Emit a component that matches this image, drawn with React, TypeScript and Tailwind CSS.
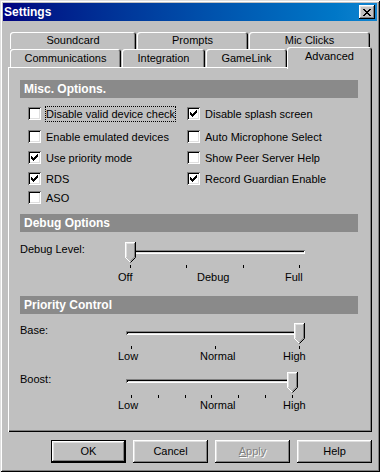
import React from 'react';

const raised =
  'shadow-[inset_-1px_-1px_#000,inset_1px_1px_#fff,inset_-2px_-2px_#808080,inset_2px_2px_#dfdfdf]';

const leftChecks = [
  { label: 'Disable valid device check', checked: false, focused: true },
  { label: 'Enable emulated devices', checked: false },
  { label: 'Use priority mode', checked: true },
  { label: 'RDS', checked: true },
  { label: 'ASO', checked: false },
];

const rightChecks = [
  { label: 'Disable splash screen', checked: true },
  { label: 'Auto Microphone Select', checked: false },
  { label: 'Show Peer Server Help', checked: false },
  { label: 'Record Guardian Enable', checked: true },
];

function CheckBox({ checked }: { checked?: boolean }) {
  return (
    <span className="w-[13px] h-[13px] shrink-0 bg-white flex items-center justify-center shadow-[inset_1px_1px_#808080,inset_-1px_-1px_#fff,inset_2px_2px_#000,inset_-2px_-2px_#dfdfdf]">
      {checked && (
        <svg width="7" height="7" viewBox="0 0 7 7" shapeRendering="crispEdges">
          <path
            d="M6 0h1v1h-1z M5 1h2v1h-2z M0 2h1v1h-1z M4 2h3v1h-3z M0 3h2v1h-2z M3 3h3v1h-3z M0 4h5v1h-5z M1 5h3v1h-3z M2 6h1v1h-1z"
            fill="#000"
          />
        </svg>
      )}
    </span>
  );
}

function Check({ label, checked, focused }: { label: string; checked?: boolean; focused?: boolean }) {
  return (
    <div className="flex items-center h-[13px]">
      <CheckBox checked={checked} />
      <span
        className={`ml-[4px] leading-[14px] border border-dotted whitespace-nowrap ${
          focused ? 'border-black' : 'border-transparent'
        }`}
      >
        {label}
      </span>
    </div>
  );
}

function Header({ title }: { title: string }) {
  return (
    <div className="w-[338px] h-[18px] bg-[#8a8a8a] text-white font-bold text-[12px] pl-[4px] flex items-center">
      {title}
    </div>
  );
}

function Thumb({ className }: { className: string }) {
  return (
    <svg className={className} width="11" height="21" viewBox="0 0 11 21" shapeRendering="crispEdges">
      <path d="M0 0H11V15.5L5.5 21L0 15.5Z" fill="#c0c0c0" />
      <path d="M0.5 15.5V0.5H10" stroke="#fff" fill="none" />
      <path d="M1.5 15V1.5H9" stroke="#dfdfdf" fill="none" />
      <path d="M0.5 15.5L5 20" stroke="#fff" fill="none" shapeRendering="auto" />
      <path d="M10.5 0V15.5L5.5 20.5" stroke="#000" fill="none" shapeRendering="auto" />
      <path d="M9.5 1V15L5.5 19" stroke="#808080" fill="none" shapeRendering="auto" />
    </svg>
  );
}

function Ticks({ count, className }: { count: number; className: string }) {
  return (
    <div className={`flex justify-between h-[3px] ${className}`}>
      {Array.from({ length: count }).map((_, i) => (
        <span key={i} className="w-px h-[3px] bg-black" />
      ))}
    </div>
  );
}

const track =
  'h-[4px] bg-[#c0c0c0] shadow-[inset_1px_1px_#808080,inset_-1px_-1px_#fff,inset_2px_2px_#000,inset_-2px_-2px_#dfdfdf]';

function Tab({ label, className }: { label: string; className: string }) {
  return (
    <div
      className={`flex items-center justify-center rounded-t-[3px] shadow-[inset_1px_1px_#fff,inset_-1px_0_#000,inset_-2px_0_#808080] ${className}`}
    >
      {label}
    </div>
  );
}

function Button({ children, isDefault }: { children: React.ReactNode; isDefault?: boolean }) {
  return (
    <div
      className={`w-[75px] h-[23px] flex items-center justify-center ${
        isDefault
          ? 'shadow-[inset_0_0_0_1px_#000,inset_-2px_-2px_#000,inset_2px_2px_#fff,inset_-3px_-3px_#808080,inset_3px_3px_#dfdfdf]'
          : raised
      }`}
    >
      {children}
    </div>
  );
}

export default function App() {
  return (
    <div className="w-[380px] h-[472px] overflow-hidden bg-[#c0c0c0] p-[3px] shadow-[inset_1px_1px_#dfdfdf,inset_-1px_-1px_#000,inset_2px_2px_#fff,inset_-2px_-2px_#808080] font-['Liberation_Sans',Arial,sans-serif] text-[11px] leading-[13px] text-black">
      {/* title bar */}
      <div className="h-[18px] flex items-center justify-between bg-linear-to-r from-[#000080] to-[#1084d0] pl-[1px] pr-[2px]">
        <span className="text-white font-bold text-[12px]">Settings</span>
        <div className={`w-[16px] h-[14px] bg-[#c0c0c0] flex items-center justify-center ${raised}`}>
          <svg width="8" height="7" viewBox="0 0 8 7" shapeRendering="crispEdges">
            <path
              d="M0 0h2v1h-2z M6 0h2v1h-2z M1 1h2v1h-2z M5 1h2v1h-2z M2 2h4v1h-4z M3 3h2v1h-2z M2 4h4v1h-4z M1 5h2v1h-2z M5 5h2v1h-2z M0 6h2v1h-2z M6 6h2v1h-2z"
              fill="#000"
            />
          </svg>
        </div>
      </div>

      <div className="px-[5px] mt-[11px]">
        {/* tabs */}
        <div className="ml-[2px] flex gap-[1px] h-[17px]">
          <Tab label="Soundcard" className="w-[126px] h-[17px]" />
          <Tab label="Prompts" className="w-[111px] h-[17px]" />
          <Tab label="Mic Clicks" className="w-[121px] h-[17px]" />
        </div>
        <div className="ml-[2px] flex items-end h-[18px]">
          <Tab label="Communications" className="w-[111px] h-[18px]" />
          <Tab label="Integration" className="ml-[1px] w-[83px] h-[18px]" />
          <Tab label="GameLink" className="ml-[1px] w-[81px] h-[18px]" />
          <div className="relative z-10 w-[85px] h-[22px] -mb-[2px] bg-[#c0c0c0] rounded-t-[3px] flex justify-center pt-[3px] shadow-[inset_1px_1px_#fff,inset_-1px_0_#000,inset_-2px_0_#808080]">
            Advanced
          </div>
        </div>

        {/* panel */}
        <div className="h-[365px] pt-[13px] pl-[12px] shadow-[inset_1px_1px_#fff,inset_-1px_-1px_#000,inset_-2px_-2px_#808080]">
          <Header title="Misc. Options." />
          <div className="mt-[9px] pl-[8px] grid grid-cols-[159px_1fr] grid-rows-[23px_21px_21px_19px_13px]">
            {leftChecks.map((c, i) => (
              <React.Fragment key={c.label}>
                <Check {...c} />
                {rightChecks[i] ? <Check {...rightChecks[i]} /> : <div />}
              </React.Fragment>
            ))}
          </div>

          <div className="mt-[10px]">
            <Header title="Debug Options" />
          </div>
          <div className="mt-[10px] flex">
            <div className="w-[98px] pt-px">Debug Level:</div>
            <div className="flex flex-col">
              <div className="relative h-[21px]">
                <div className={`ml-[9px] mt-[8px] w-[178px] ${track}`} />
                <Thumb className="absolute top-0 left-[7px]" />
              </div>
              <Ticks count={4} className="ml-[12px] w-[170px] mt-[2px]" />
              <div className="flex mt-[3px]">
                <span className="w-[79px]">Off</span>
                <span className="w-[88px]">Debug</span>
                <span>Full</span>
              </div>
            </div>
          </div>

          <div className="mt-[12px]">
            <Header title="Priority Control" />
          </div>
          <div className="mt-[9px] flex">
            <div className="w-[98px] pt-px">Base:</div>
            <div className="flex flex-col">
              <div className="relative h-[21px]">
                <div className={`ml-[8px] mt-[8px] w-[179px] ${track}`} />
                <Thumb className="absolute top-0 left-[176px]" />
              </div>
              <Ticks count={3} className="ml-[13px] w-[169px] mt-[2px]" />
              <div className="flex mt-[1px]">
                <span className="w-[82px]">Low</span>
                <span className="w-[83px]">Normal</span>
                <span>High</span>
              </div>
            </div>
          </div>
          <div className="mt-[9px] flex">
            <div className="w-[98px] pt-px">Boost:</div>
            <div className="flex flex-col">
              <div className="relative h-[21px]">
                <div className={`ml-[8px] mt-[7px] w-[172px] ${track}`} />
                <Thumb className="absolute top-0 left-[169px]" />
              </div>
              <Ticks count={7} className="ml-[13px] w-[162px] mt-[2px]" />
              <div className="flex mt-[1px]">
                <span className="w-[82px]">Low</span>
                <span className="w-[83px]">Normal</span>
                <span>High</span>
              </div>
            </div>
          </div>
        </div>

        {/* buttons */}
        <div className="mt-[8px] flex justify-end gap-[7px]">
          <Button isDefault>OK</Button>
          <Button>Cancel</Button>
          <Button>
            <span className="text-[#808080] [text-shadow:1px_1px_#fff]">
              <span className="underline">A</span>pply
            </span>
          </Button>
          <Button>Help</Button>
        </div>
      </div>
    </div>
  );
}
